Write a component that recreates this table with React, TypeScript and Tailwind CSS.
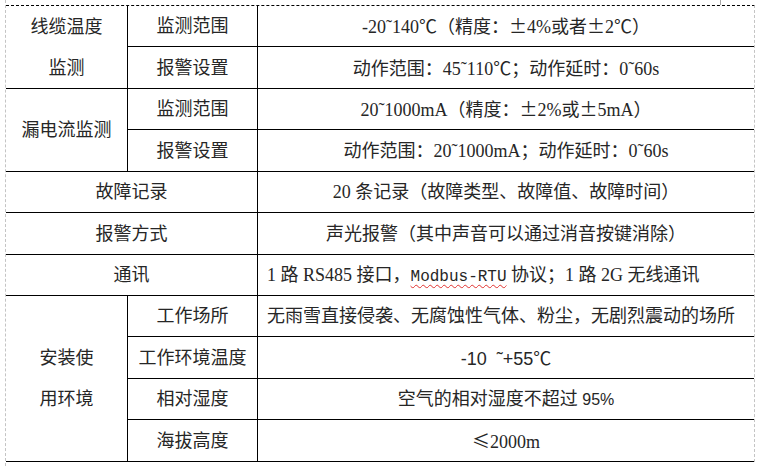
const cell = "flex items-center justify-center border-b border-black whitespace-nowrap";
const cellR = "flex items-center justify-center border-b border-r border-black whitespace-nowrap";

function W({ children }: { children: React.ReactNode }) {
  // full-width symbols come from the CJK face, as in the source document
  return <span className="font-['Noto_Sans_CJK_SC',sans-serif]">{children}</span>;
}

export default function App() {
  return (
    <div className="w-[759px] h-[466px] bg-white overflow-hidden text-[18px] leading-none text-[#262626] font-['Liberation_Serif','Noto_Sans_CJK_SC',serif]">
      <div className="ml-[5px] h-full border-l border-dashed border-[#c4c4c4]">
        <div className="h-[5px] flex">
          <div className="ml-[714px] w-px h-full bg-[#a8a8a8]" />
        </div>
        <div className="w-[749px] border-t border-black border-r border-r-[#c4c4c4] border-dashed border-t-solid">
          <div className="grid grid-cols-[122px_130px_1fr] grid-rows-[41px_42px_41px_42px_41px_42px_41px_41px_42px_41px_42px]">
            {/* 线缆温度监测 */}
            <div className="row-span-2 flex flex-col border-b border-r border-black">
              <div className="h-[41px] flex items-center justify-center">线缆温度</div>
              <div className="flex-1 flex items-center justify-center">监测</div>
            </div>
            <div className={cellR}>监测范围</div>
            <div className={cell}>
              <span>
                -20˜140<W>℃</W>（精度：<W>±</W>4%或者<W>±</W>2<W>℃</W>）
              </span>
            </div>
            <div className={cellR}>报警设置</div>
            <div className={cell}>
              <span>
                动作范围：45˜110<W>℃</W>；动作延时：0˜60s
              </span>
            </div>

            {/* 漏电流监测 */}
            <div className={`row-span-2 ${cellR}`}>漏电流监测</div>
            <div className={cellR}>监测范围</div>
            <div className={cell}>
              <span>
                20˜1000mA（精度：<W>±</W>2%或<W>±</W>5mA）
              </span>
            </div>
            <div className={cellR}>报警设置</div>
            <div className={cell}>动作范围：20˜1000mA；动作延时：0˜60s</div>

            <div className={`col-span-2 ${cellR}`}>故障记录</div>
            <div className={cell}>20 条记录（故障类型、故障值、故障时间）</div>

            <div className={`col-span-2 ${cellR}`}>报警方式</div>
            <div className={cell}>声光报警（其中声音可以通过消音按键消除）</div>

            <div className={`col-span-2 ${cellR}`}>通讯</div>
            <div className="flex items-center pl-[9px] border-b border-black whitespace-nowrap">
              <span>
                1 路 RS485 接口，
                <span className="font-['Liberation_Mono',monospace] text-[16px] underline decoration-wavy decoration-[#e0322f] decoration-1 underline-offset-[3px]">
                  Modbus-RTU
                </span>{" "}
                协议；1 路 2G 无线通讯
              </span>
            </div>

            {/* 安装使用环境 */}
            <div className="row-span-4 flex flex-col items-center justify-center border-b border-r border-black">
              <div className="h-[41px] flex items-center">安装使</div>
              <div className="h-[41px] flex items-center">用环境</div>
            </div>
            <div className={cellR}>工作场所</div>
            <div className="flex items-center pl-[9px] border-b border-black whitespace-nowrap">
              无雨雪直接侵袭、无腐蚀性气体、粉尘，无剧烈震动的场所
            </div>
            <div className={cellR}>工作环境温度</div>
            <div className={cell}>
              <span>
                <span className="font-['Liberation_Sans',sans-serif]">-10 &nbsp;˜+55</span>
                <W>℃</W>
              </span>
            </div>
            <div className={cellR}>相对湿度</div>
            <div className={cell}>
              <span>
                空气的相对湿度不超过 <span className="font-['Liberation_Sans',sans-serif] text-[16px]">95%</span>
              </span>
            </div>
            <div className={cellR}>海拔高度</div>
            <div className={cell}>
              <span>
                <W>≤</W>2000m
              </span>
            </div>
          </div>
        </div>
      </div>
    </div>
  );
}
